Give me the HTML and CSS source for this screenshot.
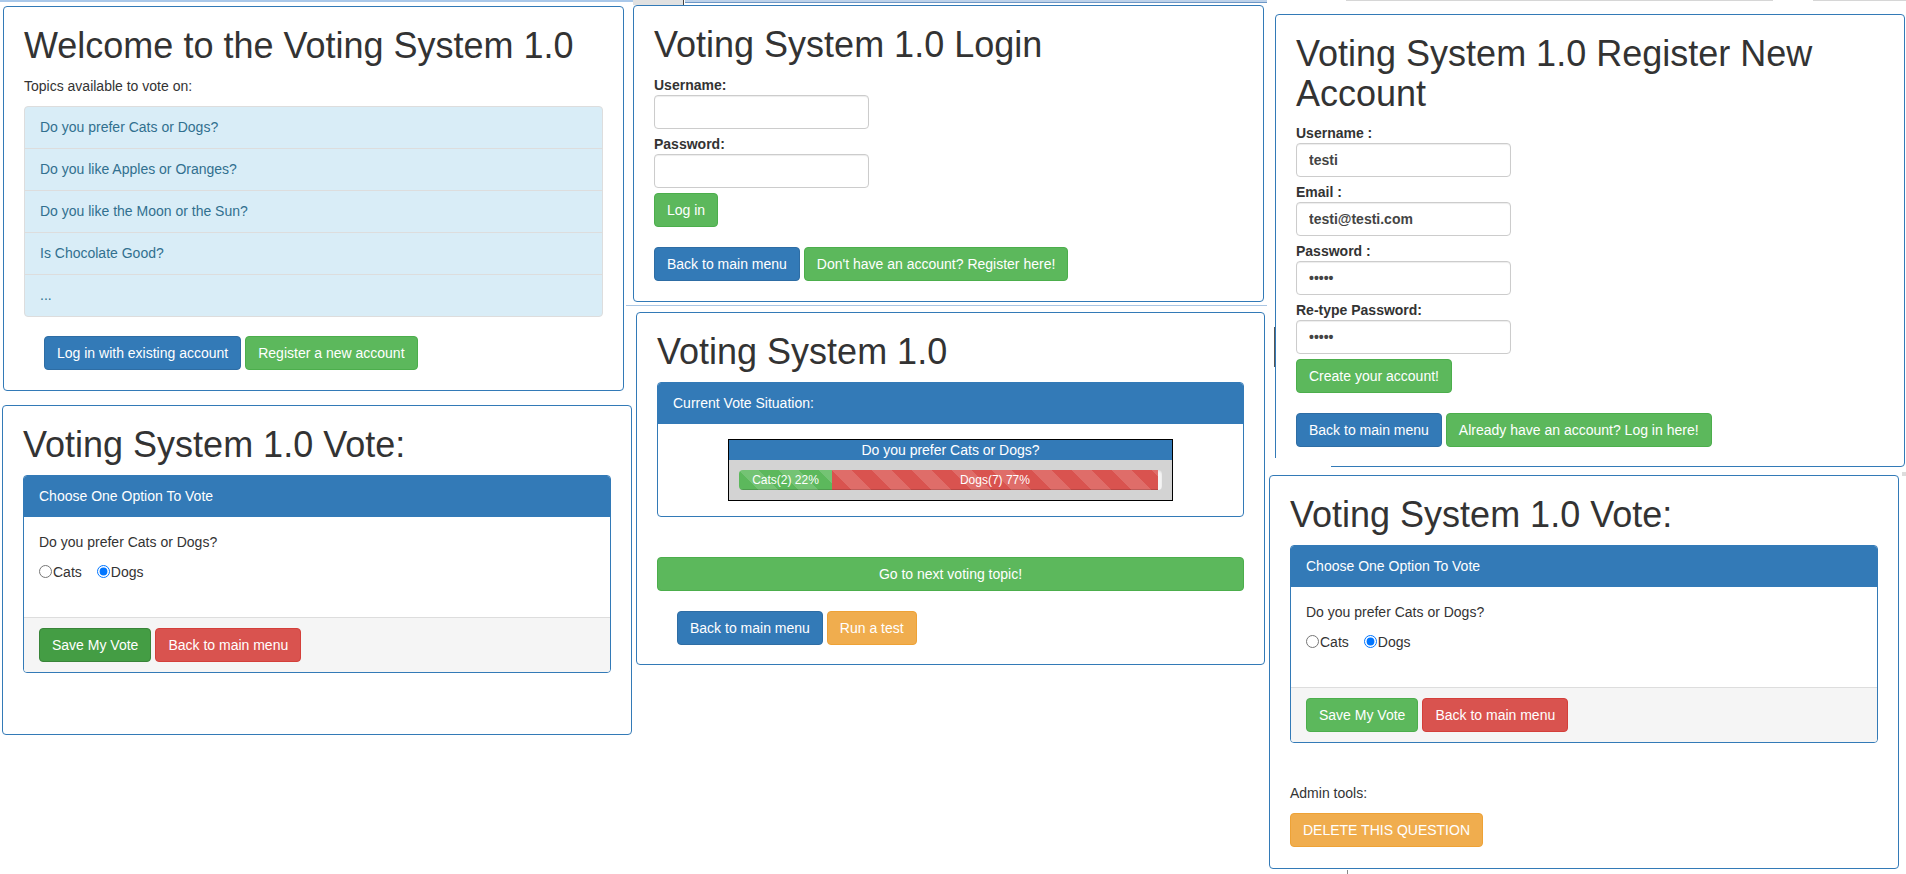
FILE: index.html
```html
<!DOCTYPE html>
<html lang="en">
<head>
<meta charset="utf-8">
<title>Voting System 1.0</title>
<link rel="stylesheet" href="styles.css">
</head>
<body>
<div class="canvas">
  <div class="deco deco-top-a"></div>
  <div class="deco deco-top-b"></div>
  <div class="deco deco-tick-a"></div>
  <div class="deco deco-top-c"></div>
  <div class="deco deco-top-d"></div>
  <div class="deco deco-top-e"></div>
  <div class="deco deco-mid-line"></div>

  <section class="win win-welcome">
    <h1>Welcome to the Voting System 1.0</h1>
    <p class="text">Topics available to vote on:</p>
    <ul class="list-group">
      <li>Do you prefer Cats or Dogs?</li>
      <li>Do you like Apples or Oranges?</li>
      <li>Do you like the Moon or the Sun?</li>
      <li>Is Chocolate Good?</li>
      <li class="more">...</li>
    </ul>
    <div class="btn-row indent">
      <button class="btn btn-primary">Log in with existing account</button>
      <button class="btn btn-success">Register a new account</button>
    </div>
  </section>

  <section class="win win-login">
    <h1>Voting System 1.0 Login</h1>
    <div class="field">
      <label>Username:</label>
      <input type="text">
    </div>
    <div class="field">
      <label>Password:</label>
      <input type="password">
    </div>
    <button class="btn btn-success">Log in</button>
    <div class="btn-row spaced">
      <button class="btn btn-primary">Back to main menu</button>
      <button class="btn btn-success">Don't have an account? Register here!</button>
    </div>
  </section>

  <section class="win win-register">
    <h1>Voting System 1.0 Register New Account</h1>
    <div class="field filled">
      <label>Username :</label>
      <input type="text" value="testi">
    </div>
    <div class="field filled">
      <label>Email :</label>
      <input type="text" value="testi@testi.com">
    </div>
    <div class="field filled">
      <label>Password :</label>
      <input type="password" value="testi">
    </div>
    <div class="field filled">
      <label>Re-type Password:</label>
      <input type="password" value="testi">
    </div>
    <button class="btn btn-success">Create your account!</button>
    <div class="btn-row spaced">
      <button class="btn btn-primary">Back to main menu</button>
      <button class="btn btn-success">Already have an account? Log in here!</button>
    </div>
  </section>
  <div class="deco deco-reg-cut"></div>
  <div class="deco deco-reg-dark"></div>

  <section class="win win-results">
    <h1>Voting System 1.0</h1>
    <div class="panel">
      <div class="panel-heading">Current Vote Situation:</div>
      <div class="panel-body">
        <div class="result-box">
          <div class="result-title">Do you prefer Cats or Dogs?</div>
          <div class="result-area">
            <div class="progress">
              <div class="bar bar-green" style="width:22%">Cats(2) 22%</div>
              <div class="bar bar-red" style="width:77%">Dogs(7) 77%</div>
            </div>
          </div>
        </div>
      </div>
    </div>
    <div class="spacer"></div>
    <button class="btn btn-success btn-block">Go to next voting topic!</button>
    <div class="btn-row spaced indent">
      <button class="btn btn-primary">Back to main menu</button>
      <button class="btn btn-warning">Run a test</button>
    </div>
  </section>

  <section class="win win-vote-a">
    <h1>Voting System 1.0 Vote:</h1>
    <div class="panel">
      <div class="panel-heading">Choose One Option To Vote</div>
      <div class="panel-body">
        <p class="text">Do you prefer Cats or Dogs?</p>
        <div class="choices">
          <label class="opt"><input type="radio" name="va">Cats</label>
          <label class="opt"><input type="radio" name="va" checked>Dogs</label>
        </div>
      </div>
      <div class="panel-footer btn-row">
        <button class="btn btn-success-dark">Save My Vote</button>
        <button class="btn btn-danger">Back to main menu</button>
      </div>
    </div>
  </section>

  <section class="win win-vote-b">
    <h1>Voting System 1.0 Vote:</h1>
    <div class="panel">
      <div class="panel-heading">Choose One Option To Vote</div>
      <div class="panel-body">
        <p class="text">Do you prefer Cats or Dogs?</p>
        <div class="choices">
          <label class="opt"><input type="radio" name="vb">Cats</label>
          <label class="opt"><input type="radio" name="vb" checked>Dogs</label>
        </div>
      </div>
      <div class="panel-footer btn-row">
        <button class="btn btn-success">Save My Vote</button>
        <button class="btn btn-danger">Back to main menu</button>
      </div>
    </div>
    <div class="spacer"></div>
    <p class="text">Admin tools:</p>
    <button class="btn btn-warning">DELETE THIS QUESTION</button>
  </section>

  <div class="deco deco-sq"></div>
  <div class="deco deco-tick-b"></div>
</div>
</body>
</html>
```

FILE: styles.css
```css
* { box-sizing: border-box; }

html, body {
  margin: 0;
  padding: 0;
}

body {
  width: 1906px;
  height: 874px;
  overflow: hidden;
  background: #fff;
  font-family: "Liberation Sans", Arial, Helvetica, sans-serif;
  font-size: 14px;
  line-height: 20px;
  color: #333;
}

.canvas {
  position: relative;
  width: 1906px;
  height: 874px;
}

/* windows of the collage */
.win {
  position: absolute;
  background: #fff;
  border: 1px solid #337ab7;
  border-radius: 4px;
  padding: 0 20px;
}

.win h1 {
  margin: 19px 0 10px;
  font-size: 36px;
  font-weight: 500;
  line-height: 1.1;
  color: #333;
}

.win-welcome  { left: 3px;    top: 6px;   width: 621px; height: 385px; }
.win-login    { left: 633px;  top: 5px;   width: 631px; height: 297px; }
.win-register { left: 1275px; top: 14px;  width: 630px; height: 453px; }
.win-results  { left: 636px;  top: 312px; width: 629px; height: 353px; }
.win-vote-a   { left: 2px;    top: 405px; width: 630px; height: 330px; }
.win-vote-b   { left: 1269px; top: 475px; width: 630px; height: 394px; }

.text {
  margin: 0 0 10px;
}

/* list group */
.list-group {
  list-style: none;
  margin: 0 0 20px;
  padding: 0;
}

.list-group li {
  background: #d9edf7;
  color: #31708f;
  padding: 10px 15px 11px;
  border: 1px solid #ddd;
  margin-bottom: -1px;
}

.list-group li:first-child { border-radius: 4px 4px 0 0; }
.list-group li:last-child { border-radius: 0 0 4px 4px; }

/* buttons */
.btn {
  display: inline-block;
  font: inherit;
  font-size: 14px;
  line-height: 20px;
  padding: 6px 12px;
  border: 1px solid transparent;
  border-radius: 4px;
  color: #fff;
  white-space: nowrap;
  cursor: pointer;
  text-align: center;
}

.btn-primary { background: #337ab7; border-color: #2e6da4; }
.btn-success { background: #5cb85c; border-color: #4cae4c; }
.btn-success-dark { background: #449d44; border-color: #398439; }
.btn-danger { background: #d9534f; border-color: #d43f3a; }
.btn-warning { background: #f0ad4e; border-color: #eea236; }

.btn-block {
  display: block;
  width: 100%;
}

.btn-row {
  display: flex;
  gap: 4px;
}

.btn-row.spaced { margin-top: 20px; }
.btn-row.indent { padding-left: 20px; }

/* form fields */
.field label {
  display: block;
  font-weight: 700;
  margin: 0;
}

.field input {
  display: block;
  width: 215px;
  height: 34px;
  margin: 0 0 5px;
  padding: 6px 12px;
  font: inherit;
  color: #555;
  background: #fff;
  border: 1px solid #ccc;
  border-radius: 4px;
  box-shadow: inset 0 1px 1px rgba(0, 0, 0, .075);
}

.field.filled input {
  font-weight: 700;
  color: #444;
}

/* panels */
.panel {
  border: 1px solid #337ab7;
  border-radius: 4px;
  margin-bottom: 20px;
  background: #fff;
}

.panel-heading {
  background: #337ab7;
  color: #fff;
  padding: 10px 15px;
  border-bottom: 1px solid #337ab7;
  border-radius: 3px 3px 0 0;
}

.panel-body {
  padding: 15px;
}

.panel-footer {
  background: #f5f5f5;
  border-top: 1px solid #ddd;
  padding: 10px 15px;
  border-radius: 0 0 3px 3px;
}

.spacer { height: 20px; }

/* radios */
.choices {
  display: flex;
  align-items: center;
  height: 20px;
  margin: 1px 0 20px;
}

.opt {
  display: flex;
  align-items: center;
  margin-right: 15px;
}

.opt input {
  margin: 0 1px 0 0;
  width: 13px;
  height: 13px;
}

/* result box */
.result-box {
  width: 445px;
  margin: 0 auto;
  border: 1px solid #000;
}

.result-title {
  background: #337ab7;
  color: #fff;
  text-align: center;
  line-height: 20px;
}

.result-area {
  background: #d3d3d3;
  padding: 10px;
}

.progress {
  display: flex;
  height: 20px;
  background: #f5f5f5;
  border-radius: 4px;
  overflow: hidden;
  box-shadow: inset 0 1px 2px rgba(0, 0, 0, .1);
}

.bar {
  height: 20px;
  font-size: 12px;
  line-height: 20px;
  color: #fff;
  text-align: center;
  white-space: nowrap;
  box-shadow: inset 0 -1px 0 rgba(0, 0, 0, .15);
  background-image: linear-gradient(45deg, rgba(255,255,255,.15) 25%, transparent 25%, transparent 50%, rgba(255,255,255,.15) 50%, rgba(255,255,255,.15) 75%, transparent 75%, transparent);
  background-size: 40px 40px;
}

.bar-green { background-color: #5cb85c; }
.bar-red { background-color: #d9534f; }

/* collage seams */
.deco { position: absolute; }

.deco-top-a { left: 0; top: 0; width: 633px; height: 2px; background: #a9c8ea; }
.deco-top-b { left: 633px; top: 0; width: 50px; height: 5px; background: #e1e1e1; }
.deco-tick-a { left: 683px; top: 0; width: 1px; height: 5px; background: #444; }
.deco-top-c { left: 685px; top: 0; width: 582px; height: 3px; background: #bdd2ea; border-bottom: 1px solid #6d97c6; }
.deco-top-d { left: 1346px; top: 0; width: 427px; height: 1px; background: #d6d6d6; }
.deco-top-e { left: 1813px; top: 0; width: 93px; height: 1px; background: #d6d6d6; }
.deco-mid-line { left: 626px; top: 305px; width: 641px; height: 1px; background: #a9c5e3; }
.deco-reg-cut { left: 1274px; top: 458px; width: 57px; height: 10px; background: #fff; }
.deco-reg-dark { left: 1274px; top: 327px; width: 1px; height: 40px; background: #555; }
.deco-sq { left: 1902px; top: 472px; width: 4px; height: 4px; background: #ddd; }
.deco-tick-b { left: 1347px; top: 870px; width: 1px; height: 4px; background: #888; }
```
